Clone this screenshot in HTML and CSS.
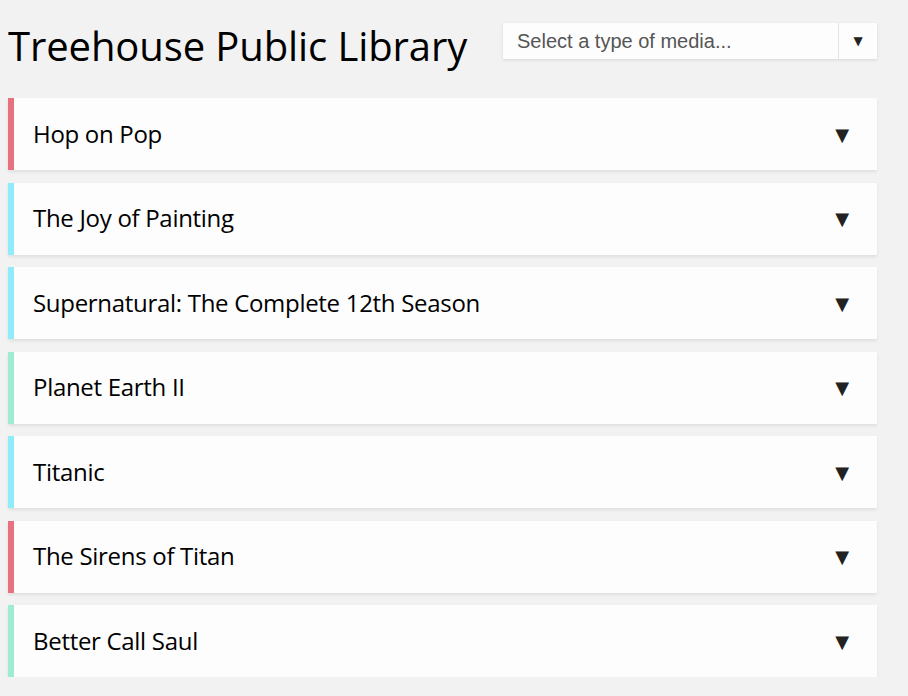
FILE: index.html
```html
<!DOCTYPE html>
<html>
<head>
<meta charset="utf-8">
<link rel="stylesheet" href="styles.css">
</head>
<body>
<header class="header">
  <h1 class="title">Treehouse Public Library</h1>
  <div class="select">
    <span class="select-text">Select a type of media...</span>
    <span class="select-btn">&#9660;</span>
  </div>
</header>
<ul class="list">
  <li class="item red"><span class="name">Hop on Pop</span><span class="arrow">&#9660;</span></li>
  <li class="item cyan"><span class="name">The Joy of Painting</span><span class="arrow">&#9660;</span></li>
  <li class="item cyan"><span class="name">Supernatural: The Complete 12th Season</span><span class="arrow">&#9660;</span></li>
  <li class="item green"><span class="name">Planet Earth II</span><span class="arrow">&#9660;</span></li>
  <li class="item cyan"><span class="name">Titanic</span><span class="arrow">&#9660;</span></li>
  <li class="item red"><span class="name">The Sirens of Titan</span><span class="arrow">&#9660;</span></li>
  <li class="item green"><span class="name">Better Call Saul</span><span class="arrow">&#9660;</span></li>
</ul>
</body>
</html>
```
FILE: styles.css
```css
html, body { margin: 0; padding: 0; }
body {
  background: #f2f2f2;
  font-family: "Open Sans", "Noto Sans", sans-serif;
  color: #000;
  padding: 0 31px 0 8px;
}
.header {
  display: flex;
  align-items: center;
  justify-content: space-between;
  height: 98px;
  padding-bottom: 8px;
  box-sizing: border-box;
}
.title {
  margin: 0;
  font-size: 40px;
  font-weight: 400;
  letter-spacing: -0.1px;
}
.select {
  display: flex;
  width: 374px;
  height: 36px;
  background: #fdfdfd;
  box-shadow: 0 1px 3px rgba(0,0,0,0.12);
  margin-top: -8px;
  font-family: "Liberation Sans", Arial, sans-serif;
}
.select-text {
  flex: 1;
  padding-left: 14px;
  line-height: 36px;
  font-size: 20px;
  color: #555;
}
.select-btn {
  width: 38px;
  border-left: 1px solid #e4e4e4;
  text-align: center;
  line-height: 36px;
  font-size: 12px;
  color: #222;
  font-family: "DejaVu Sans", sans-serif;
}
.list {
  list-style: none;
  margin: 0;
  padding: 0;
  display: flex;
  flex-direction: column;
  gap: 12.5px;
}
.item {
  display: flex;
  align-items: center;
  justify-content: space-between;
  height: 72px;
  background: #fdfdfd;
  border-left: 6px solid #e8717f;
  box-shadow: 0 2px 3px rgba(0,0,0,0.08);
  padding: 0 28px 0 19px;
  box-sizing: border-box;
}
.item.red { border-left-color: #e8717f; }
.item.cyan { border-left-color: #90ebfb; }
.item.green { border-left-color: #9eedd0; }
.name {
  font-size: 24px;
  letter-spacing: -0.3px;
  padding-bottom: 2px;
}
.arrow {
  font-size: 18px;
  color: #222;
  font-family: "DejaVu Sans", sans-serif;
}
```
